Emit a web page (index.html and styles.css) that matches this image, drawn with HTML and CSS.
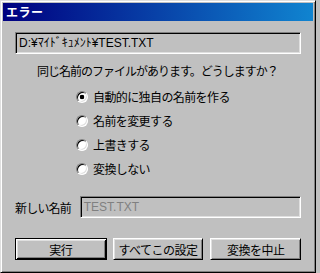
FILE: index.html
```html
<!DOCTYPE html>
<html lang="ja">
<head>
<meta charset="utf-8">
<link rel="stylesheet" href="styles.css">
</head>
<body>
<div class="window">
  <div class="titlebar"><span class="title">エラー</span></div>
  <div class="content">
    <div class="field path">D:¥ﾏｲﾄﾞｷｭﾒﾝﾄ¥TEST.TXT</div>
    <div class="message">同じ名前のファイルがあります。どうしますか？</div>
    <div class="radios">
      <div class="radio-row"><span class="radio checked"></span><span class="rlabel">自動的に独自の名前を作る</span></div>
      <div class="radio-row"><span class="radio"></span><span class="rlabel">名前を変更する</span></div>
      <div class="radio-row"><span class="radio"></span><span class="rlabel">上書きする</span></div>
      <div class="radio-row"><span class="radio"></span><span class="rlabel">変換しない</span></div>
    </div>
    <div class="name-row">
      <span class="name-label">新しい名前</span>
      <div class="field disabled">TEST.TXT</div>
    </div>
    <div class="buttons">
      <div class="btn default">実行</div>
      <div class="btn">すべてこの設定</div>
      <div class="btn">変換を中止</div>
    </div>
  </div>
</div>
</body>
</html>
```

FILE: styles.css
```css
html, body {
  margin: 0;
  padding: 0;
  background: #c0c0c0;
}
body {
  font-family: "Liberation Sans", "Noto Sans CJK JP", sans-serif;
  font-size: 12px;
  color: #000;
}
.window {
  width: 316px;
  height: 273px;
  box-sizing: border-box;
  background: #c0c0c0;
  border: 1px solid;
  border-color: #dfdfdf #000 #000 #dfdfdf;
  box-shadow: inset 1px 1px #fff, inset -1px -1px #808080;
  padding: 2px;
  display: flex;
  flex-direction: column;
}
.titlebar {
  height: 18px;
  background: linear-gradient(to right, #000080, #1084d0);
  display: flex;
  align-items: center;
  padding-left: 3px;
}
.title {
  color: #fff;
  font-family: "Noto Sans CJK JP", sans-serif;
  font-weight: bold;
  font-size: 12px;
  letter-spacing: 0.5px;
  line-height: 18px;
}
.content {
  padding: 11px 12px 0 12px;
  display: flex;
  flex-direction: column;
}
.field {
  height: 22px;
  box-sizing: border-box;
  border: 1px solid;
  border-color: #808080 #fff #fff #808080;
  box-shadow: inset 1px 1px #000, inset -1px -1px #dfdfdf;
  padding-left: 3px;
  line-height: 20px;
  white-space: nowrap;
  overflow: hidden;
}
.path {
  width: 286px;
}
.message {
  margin-top: 10px;
  padding-left: 22px;
  line-height: 14px;
  height: 14px;
  font-family: "Noto Sans CJK JP", sans-serif;
  letter-spacing: -1px;
  white-space: nowrap;
}
.radios {
  margin-top: 7px;
  display: flex;
  flex-direction: column;
  padding-left: 61px;
}
.radio-row {
  height: 24px;
  display: flex;
  align-items: center;
  gap: 5px;
}
.radio {
  width: 12px;
  height: 12px;
  box-sizing: border-box;
  border-radius: 50%;
  border: 1px solid;
  border-color: #808080 #fff #fff #808080;
  box-shadow: inset 1px 1px #000, inset -1px -1px #dfdfdf;
  background: #fff;
  flex: none;
}
.radio.checked {
  background: radial-gradient(circle, #000 0, #000 2px, #fff 2.6px);
}
.rlabel {
  font-family: "Noto Sans CJK JP", sans-serif;
  letter-spacing: -0.6px;
  line-height: 14px;
  white-space: nowrap;
}
.name-row {
  margin-top: 15px;
  display: flex;
  align-items: center;
}
.name-label {
  width: 65px;
  font-family: "Noto Sans CJK JP", sans-serif;
  letter-spacing: -0.8px;
  white-space: nowrap;
}
.field.disabled {
  width: 222px;
  color: #808080;
  background: #c0c0c0;
}
.buttons {
  margin-top: 20px;
  display: flex;
  gap: 6px;
}
.btn {
  height: 22px;
  box-sizing: border-box;
  border: 1px solid;
  border-color: #fff #000 #000 #fff;
  box-shadow: inset 1px 1px #dfdfdf, inset -1px -1px #808080;
  display: flex;
  align-items: center;
  justify-content: center;
  font-family: "Noto Sans CJK JP", sans-serif;
  letter-spacing: -0.5px;
  white-space: nowrap;
  width: 91px;
}
.btn.default {
  width: 92px;
  border-color: #000;
  box-shadow: inset 1px 1px #fff, inset -1px -1px #000, inset 2px 2px #dfdfdf, inset -2px -2px #808080;
}
.btn + .btn + .btn {
  margin-left: 1px;
}
```
